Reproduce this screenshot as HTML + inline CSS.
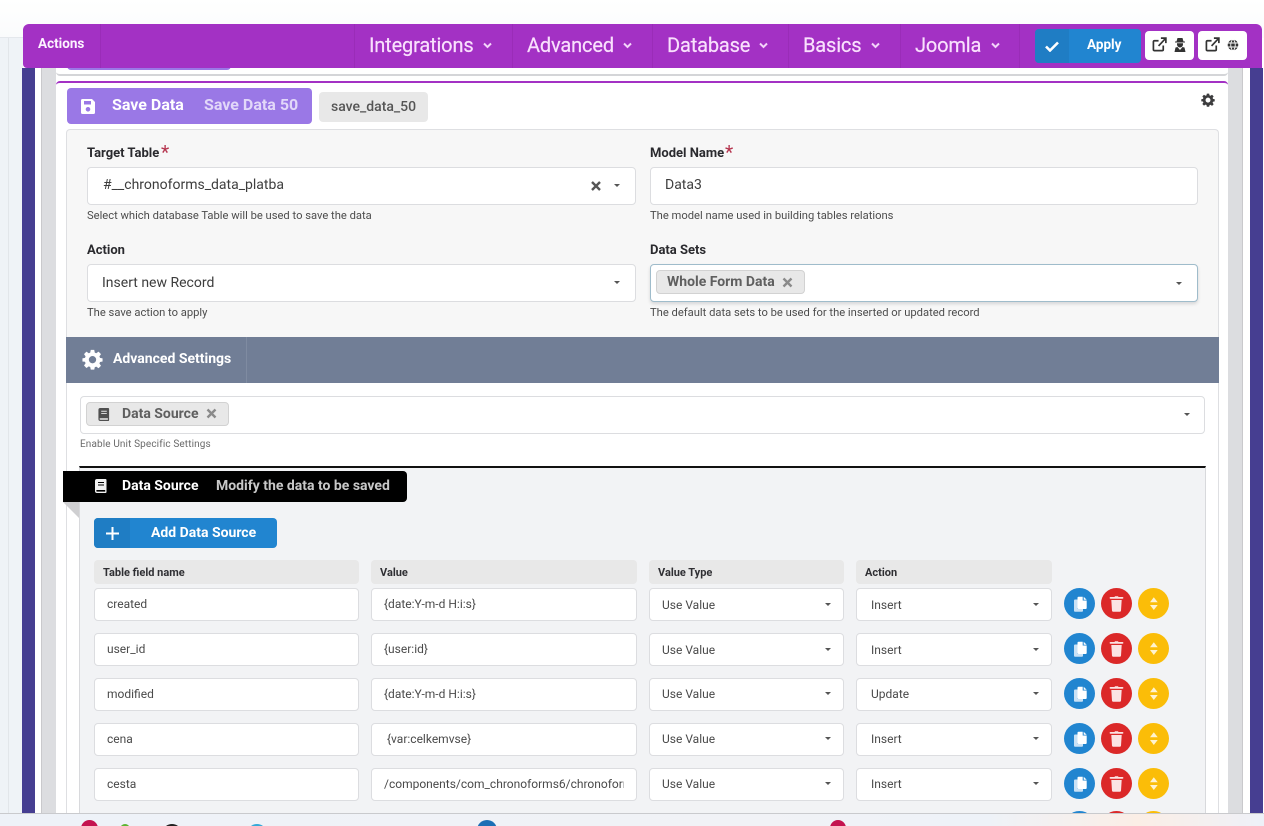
<!DOCTYPE html>
<html><head><meta charset="utf-8"><title>Save Data</title>
<style>
*{box-sizing:border-box}
html,body{margin:0;padding:0;width:1264px;height:826px;overflow:hidden;background:#fff;font-family:"Roboto","Liberation Sans",sans-serif;color:#333}
#root{position:relative;width:1264px;height:826px;overflow:hidden;background:#fff}
.a{position:absolute}
.t{position:absolute;white-space:nowrap;line-height:1}
.box{position:absolute;background:#fff;border:1px solid #dcdde0;border-radius:4px}
.lab{font-size:13px;font-weight:bold;color:#2a2a2e}
.hint{font-size:11.2px;color:#4c4c4c}
.ast{font-size:19px;color:#b5344e}
.hd{position:absolute;top:560px;height:24px;background:#e8e8e8;border-radius:4px;font-size:11px;font-weight:bold;color:#2f2f33;padding:6px 0 0 9px;line-height:13px}
.in{font-size:12px;color:#4a4a4a}
.car{position:absolute;width:0;height:0;border-left:3.500px solid transparent;border-right:3.500px solid transparent;border-top:3.500px solid #555}
.m{font-size:20px;letter-spacing:-.15px;color:#f9e0fd;top:35px;-webkit-text-stroke:.2px #f9e0fd}
.sep{position:absolute;top:24px;height:44px;width:1px;background:#9a2cb8}
.c{position:absolute;width:31px;height:31px;border-radius:50%}
.c svg{position:absolute;left:0;top:0}
.chip{position:absolute;background:#e8e8e8;border:1px solid #d2d2d2;border-radius:4px}
</style></head><body><div id="root">
<svg width="0" height="0" style="position:absolute"><defs>
<symbol id="copy" viewBox="0 0 31 31"><path fill="#c9e1f5" d="M11 11.500h2.500v9.500h5.500v1.700a1 1 0 0 1-1 1H11a1 1 0 0 1-1-1v-10.200a1 1 0 0 1 1-1z"/><path fill="#fff" d="M14.500 8.700h4.200v3.800h4v7.500a1 1 0 0 1-1 1h-7.200a1 1 0 0 1-1-1V9.700a1 1 0 0 1 1-1zM19.700 8.700l3 3h-3z"/></symbol>
<symbol id="trash" viewBox="0 0 31 31"><path fill="#fbe3e3" d="M13.500 9l.5-.8h3l.5.800h4a.6.600 0 0 1 0 1.800H9.500a.6.600 0 0 1 0-1.800zM10.300 12h10.400l-.7 10.800a1 1 0 0 1-1 .9h-7a1 1 0 0 1-1-.9z"/></symbol>
<symbol id="sort" viewBox="0 0 31 31"><path fill="#fff3cf" d="M15.800 9.300l3.900 5h-7.700zM15.800 22l-3.800-5h7.700z"/></symbol>
<symbol id="gear" viewBox="0 0 24 24"><path fill-rule="evenodd" d="M10 1h4l.6 3.100 1.700.7 2.600-1.800 2.800 2.800-1.800 2.600.7 1.700L23.500 10.700v3.600l-2.900.6-.7 1.700 1.800 2.600-2.800 2.800-2.600-1.800-1.700.7L14 23.500h-4l-.6-2.900-1.700-.7-2.600 1.800-2.800-2.800 1.800-2.600-.7-1.700L.5 14.300v-3.600l2.900-.6.7-1.700L2.300 5.800l2.800-2.800 2.600 1.800 1.700-.7zM12 8a4.200 4.200 0 1 0 0 8.400A4.200 4.200 0 0 0 12 8z"/></symbol>
<symbol id="book" viewBox="0 0 12 14"><path fill-rule="evenodd" d="M2 0h8.500a1 1 0 0 1 1 1v12a1 1 0 0 1-1 1H2a2 2 0 0 1-2-2V2a2 2 0 0 1 2-2zM2 11a.8.800 0 0 0 0 1.600h8.200V11zM3 3v1h6V3zM3 5.500v1h6v-1z"/></symbol>
<symbol id="ext" viewBox="0 0 16 16"><path fill="none" stroke="#333" stroke-width="1.800" d="M12 9v4.500a1 1 0 0 1-1 1H2.500a1 1 0 0 1-1-1V5a1 1 0 0 1 1-1H7M7 9.500L14.500 1.500M9.500 1.200h5.300v5.300"/></symbol>
</defs></svg>

<!-- page backdrop -->
<div class="a" style="left:0;top:0;width:1264px;height:38px;background:linear-gradient(#fff,#fafbfc)"></div>
<div class="a" style="left:0;top:37px;width:23px;height:776px;background:#eff3f7;border-top:1px solid #e4e8ec"></div>
<div class="a" style="left:8px;top:38px;width:1px;height:775px;background:#e2e6ea"></div>
<div class="a" style="left:22px;top:68px;width:13px;height:745px;background:#463e91"></div>
<div class="a" style="left:35px;top:68px;width:6px;height:745px;background:#fff"></div>
<div class="a" style="left:41px;top:68px;width:15px;height:745px;background:#dcdde0;border-left:1px solid #c9c9cc"></div>
<div class="a" style="left:1228px;top:68px;width:15px;height:745px;background:#dcdde0;border-right:1px solid #c9c9cc"></div>
<div class="a" style="left:1250px;top:68px;width:13px;height:745px;background:#463e91"></div>

<!-- previous card remnant -->
<div class="a" style="left:56px;top:60px;width:1172px;height:16px;background:#fff;border-bottom:2px solid #d4d5d8;border-radius:0 0 4px 4px"></div>
<div class="a" style="left:67px;top:60px;width:164px;height:10px;background:#9a78e6;border-radius:0 0 4px 4px"></div>

<!-- main card -->
<div class="a" style="left:56px;top:81px;width:1172px;height:740px;background:#fff;border-top:2px solid #a331c4;border-radius:4px 4px 0 0"></div>

<!-- title row -->
<div class="a" style="left:67px;top:88px;width:245px;height:36px;background:#9a78e6;border-radius:4px"></div>
<svg class="a" style="left:81px;top:99px" width="14" height="15" viewBox="0 0 14 15"><path fill="#fff" fill-rule="evenodd" d="M1.500 0H11l3 3v10.500a1.500 1.500 0 0 1-1.500 1.500h-11A1.500 1.500 0 0 1 0 13.500v-12A1.500 1.500 0 0 1 1.500 0zM3 2v3.500h7V2zM7 8a2.300 2.300 0 1 0 0 4.600A2.300 2.300 0 0 0 7 8z"/></svg>
<div class="t" style="left:112px;top:97px;font-size:16px;font-weight:bold;color:#fff">Save Data</div>
<div class="t" style="left:204px;top:97px;font-size:16px;font-weight:bold;color:#e2d7f9">Save Data 50</div>
<div class="a" style="left:319px;top:92px;width:109px;height:30px;background:#e8e8e8;border-radius:4px"></div>
<div class="t" style="left:331px;top:100px;font-size:14px;font-weight:500;color:#555">save_data_50</div>
<svg class="a" style="left:1201px;top:93px;fill:#3c3c3e" width="14" height="14"><use href="#gear"/></svg>

<!-- form panel -->
<div class="a" style="left:66px;top:129px;width:1153px;height:208px;background:#f7f7f7;border:1px solid #dedfe2;border-bottom:0;border-radius:4px 4px 0 0"></div>

<div class="t lab" style="left:87px;top:147px">Target Table</div>
<div class="t ast" style="left:161px;top:143px">*</div>
<div class="box" style="left:87px;top:167px;width:549px;height:38px"></div>
<div class="t" style="left:103px;top:178px;font-size:14px;color:#3d3d3d">#__chronoforms_data_platba</div>
<svg class="a" style="left:590px;top:180px" width="12" height="12" viewBox="0 0 12 12"><path stroke="#555" stroke-width="2.400" d="M2 2l8 8M10 2l-8 8"/></svg>
<div class="car" style="left:614px;top:184px"></div>
<div class="t hint" style="left:87px;top:210px">Select which database Table will be used to save the data</div>

<div class="t lab" style="left:650px;top:147px">Model Name</div>
<div class="t ast" style="left:725px;top:143px">*</div>
<div class="box" style="left:650px;top:167px;width:548px;height:38px"></div>
<div class="t" style="left:665px;top:178px;font-size:14px;color:#3d3d3d">Data3</div>
<div class="t hint" style="left:650px;top:210px">The model name used in building tables relations</div>

<div class="t lab" style="left:87px;top:244px">Action</div>
<div class="box" style="left:87px;top:264px;width:549px;height:38px"></div>
<div class="t" style="left:102px;top:276px;font-size:14px;color:#3d3d3d">Insert new Record</div>
<div class="car" style="left:614px;top:281px"></div>
<div class="t hint" style="left:87px;top:307px">The save action to apply</div>

<div class="t lab" style="left:650px;top:244px">Data Sets</div>
<div class="box" style="left:650px;top:264px;width:548px;height:38px;border-color:#9fbccb;box-shadow:0 2px 3px rgba(34,36,38,.15)"></div>
<div class="chip" style="left:656px;top:270px;width:149px;height:24px"></div>
<div class="t" style="left:667px;top:275px;font-size:14px;font-weight:bold;color:#5f5f5f">Whole Form Data</div>
<svg class="a" style="left:782px;top:277px" width="11" height="11" viewBox="0 0 11 11"><path stroke="#8a8a8a" stroke-width="2.400" d="M1.500 1.500l8 8M9.500 1.500l-8 8"/></svg>
<div class="car" style="left:1176px;top:282px"></div>
<div class="t hint" style="left:650px;top:307px">The default data sets to be used for the inserted or updated record</div>

<!-- advanced settings bar -->
<div class="a" style="left:66px;top:337px;width:1153px;height:46px;background:#717e96"></div>
<div class="a" style="left:246px;top:337px;width:1px;height:46px;background:#7f8ba1"></div>
<svg class="a" style="left:82px;top:349px;fill:#fff" width="21" height="21"><use href="#gear"/></svg>
<div class="t" style="left:113px;top:352px;font-size:14px;font-weight:bold;color:#fff">Advanced Settings</div>

<!-- white lower panel edge -->
<div class="a" style="left:66px;top:383px;width:1px;height:430px;background:#dedfe2"></div>
<div class="a" style="left:1218px;top:383px;width:1px;height:430px;background:#dedfe2"></div>

<div class="box" style="left:80px;top:396px;width:1125px;height:38px"></div>
<div class="chip" style="left:86px;top:402px;width:143px;height:24px"></div>
<svg class="a" style="left:98px;top:408px;fill:#4f4f4f" width="12" height="13"><use href="#book"/></svg>
<div class="t" style="left:122px;top:407px;font-size:14px;font-weight:bold;color:#5f5f5f">Data Source</div>
<svg class="a" style="left:206px;top:408px" width="11" height="11" viewBox="0 0 11 11"><path stroke="#8a8a8a" stroke-width="2.400" d="M1.500 1.500l8 8M9.500 1.500l-8 8"/></svg>
<div class="car" style="left:1184px;top:413px"></div>
<div class="t" style="left:80px;top:440px;font-size:10px;letter-spacing:.12px;color:#6a6a6a">Enable Unit Specific Settings</div>

<!-- data source panel -->
<div class="a" style="left:79px;top:466px;width:1127px;height:347px;background:#f2f3f5;border:1px solid #d8d9dc;border-top:2px solid #111;border-bottom:0"></div>
<svg class="a" style="left:63px;top:502px" width="17" height="16"><path fill="#cfcfd1" d="M0 0h16v16z"/></svg>
<div class="a" style="left:63px;top:471px;width:344px;height:31px;background:#000;border-radius:0 4px 4px 0"></div>
<svg class="a" style="left:95px;top:479px;fill:#f2f2f2" width="12" height="14"><use href="#book"/></svg>
<div class="t" style="left:122px;top:479px;font-size:14px;font-weight:bold;color:#fff">Data Source</div>
<div class="t" style="left:216px;top:479px;font-size:14px;font-weight:bold;color:#c8c8c8">Modify the data to be saved</div>

<div class="a" style="left:94px;top:518px;width:183px;height:30px;background:#2185d0;border-radius:4px"></div>
<div class="a" style="left:94px;top:518px;width:36px;height:30px;background:#1f7dc4;border-radius:4px 0 0 4px"></div>
<svg class="a" style="left:106px;top:527px" width="13" height="13"><path stroke="#fff" stroke-width="2" d="M6.500 0v13M0 6.500h13"/></svg>
<div class="t" style="left:151px;top:526px;font-size:14px;font-weight:bold;color:#fff">Add Data Source</div>

<div class="hd" style="left:94px;width:265px">Table field name</div>
<div class="hd" style="left:371px;width:266px">Value</div>
<div class="hd" style="left:649px;width:195px">Value Type</div>
<div class="hd" style="left:856px;width:196px">Action</div>

<!-- row 1 -->
<div class="box" style="left:94px;top:588px;width:265px;height:33px"></div><div class="t in" style="left:107px;top:598px">created</div>
<div class="box" style="left:371px;top:588px;width:266px;height:33px"></div><div class="t in" style="left:384px;top:598px">{date:Y-m-d H:i:s}</div>
<div class="box" style="left:649px;top:588px;width:195px;height:33px"></div><div class="t in" style="left:662px;top:599px">Use Value</div><div class="car" style="left:825px;top:603px"></div>
<div class="box" style="left:856px;top:588px;width:196px;height:33px"></div><div class="t in" style="left:871px;top:599px">Insert</div><div class="car" style="left:1033px;top:603px"></div>
<div class="c" style="left:1064px;top:588px;background:#2185d0"><svg width="31" height="31"><use href="#copy"/></svg></div>
<div class="c" style="left:1101px;top:588px;background:#db2828"><svg width="31" height="31"><use href="#trash"/></svg></div>
<div class="c" style="left:1138px;top:588px;background:#fbbd08"><svg width="31" height="31"><use href="#sort"/></svg></div>

<!-- row 2 -->
<div class="box" style="left:94px;top:633px;width:265px;height:33px"></div><div class="t in" style="left:107px;top:643px">user_id</div>
<div class="box" style="left:371px;top:633px;width:266px;height:33px"></div><div class="t in" style="left:384px;top:643px">{user:id}</div>
<div class="box" style="left:649px;top:633px;width:195px;height:33px"></div><div class="t in" style="left:662px;top:644px">Use Value</div><div class="car" style="left:825px;top:648px"></div>
<div class="box" style="left:856px;top:633px;width:196px;height:33px"></div><div class="t in" style="left:871px;top:644px">Insert</div><div class="car" style="left:1033px;top:648px"></div>
<div class="c" style="left:1064px;top:633px;background:#2185d0"><svg width="31" height="31"><use href="#copy"/></svg></div>
<div class="c" style="left:1101px;top:633px;background:#db2828"><svg width="31" height="31"><use href="#trash"/></svg></div>
<div class="c" style="left:1138px;top:633px;background:#fbbd08"><svg width="31" height="31"><use href="#sort"/></svg></div>

<!-- row 3 -->
<div class="box" style="left:94px;top:678px;width:265px;height:33px"></div><div class="t in" style="left:107px;top:688px">modified</div>
<div class="box" style="left:371px;top:678px;width:266px;height:33px"></div><div class="t in" style="left:384px;top:688px">{date:Y-m-d H:i:s}</div>
<div class="box" style="left:649px;top:678px;width:195px;height:33px"></div><div class="t in" style="left:662px;top:688px">Use Value</div><div class="car" style="left:825px;top:692px"></div>
<div class="box" style="left:856px;top:678px;width:196px;height:33px"></div><div class="t in" style="left:871px;top:688px">Update</div><div class="car" style="left:1033px;top:692px"></div>
<div class="c" style="left:1064px;top:678px;background:#2185d0"><svg width="31" height="31"><use href="#copy"/></svg></div>
<div class="c" style="left:1101px;top:678px;background:#db2828"><svg width="31" height="31"><use href="#trash"/></svg></div>
<div class="c" style="left:1138px;top:678px;background:#fbbd08"><svg width="31" height="31"><use href="#sort"/></svg></div>

<!-- row 4 -->
<div class="box" style="left:94px;top:723px;width:265px;height:33px"></div><div class="t in" style="left:107px;top:733px">cena</div>
<div class="box" style="left:371px;top:723px;width:266px;height:33px"></div><div class="t in" style="left:387px;top:733px">{var:celkemvse}</div>
<div class="box" style="left:649px;top:723px;width:195px;height:33px"></div><div class="t in" style="left:662px;top:733px">Use Value</div><div class="car" style="left:825px;top:737px"></div>
<div class="box" style="left:856px;top:723px;width:196px;height:33px"></div><div class="t in" style="left:871px;top:733px">Insert</div><div class="car" style="left:1033px;top:737px"></div>
<div class="c" style="left:1064px;top:723px;background:#2185d0"><svg width="31" height="31"><use href="#copy"/></svg></div>
<div class="c" style="left:1101px;top:723px;background:#db2828"><svg width="31" height="31"><use href="#trash"/></svg></div>
<div class="c" style="left:1138px;top:723px;background:#fbbd08"><svg width="31" height="31"><use href="#sort"/></svg></div>

<!-- row 5 -->
<div class="box" style="left:94px;top:768px;width:265px;height:33px"></div><div class="t in" style="left:107px;top:778px">cesta</div>
<div class="box" style="left:371px;top:768px;width:266px;height:33px"></div><div class="t in" style="left:384px;top:778px;width:240px;overflow:hidden">/components/com_chronoforms6/chronoforms</div>
<div class="box" style="left:649px;top:768px;width:195px;height:33px"></div><div class="t in" style="left:662px;top:778px">Use Value</div><div class="car" style="left:825px;top:782px"></div>
<div class="box" style="left:856px;top:768px;width:196px;height:33px"></div><div class="t in" style="left:871px;top:778px">Insert</div><div class="car" style="left:1033px;top:782px"></div>
<div class="c" style="left:1064px;top:768px;background:#2185d0"><svg width="31" height="31"><use href="#copy"/></svg></div>
<div class="c" style="left:1101px;top:768px;background:#db2828"><svg width="31" height="31"><use href="#trash"/></svg></div>
<div class="c" style="left:1138px;top:768px;background:#fbbd08"><svg width="31" height="31"><use href="#sort"/></svg></div>

<!-- row 6 sliver -->
<div class="c" style="left:1064px;top:811px;background:#2185d0"></div>
<div class="c" style="left:1101px;top:811px;background:#db2828"></div>
<div class="c" style="left:1138px;top:811px;background:#fbbd08"></div>

<!-- taskbar -->
<div class="a" style="left:0;top:813px;width:1264px;height:13px;border-top:1px solid #c9cacd;background:linear-gradient(90deg,#eef2f8 0,#f1f2f6 60%,#eef2f8 78%,#fbeee6 90%,#eef1f8 100%);overflow:hidden">
 <div class="a" style="left:81px;top:6px;width:17px;height:17px;border-radius:50%;background:#c4134f"></div>
 <div class="a" style="left:120px;top:10px;width:10px;height:10px;border-radius:50%;background:#5cb531"></div>
 <div class="a" style="left:164px;top:10px;width:16px;height:12px;border-radius:50%;background:#222"></div>
 <div class="a" style="left:249px;top:10px;width:16px;height:12px;border-radius:50%;background:#35a9d8"></div>
 <div class="a" style="left:477px;top:6px;width:20px;height:20px;border-radius:50%;background:#1c6fb5"></div>
 <div class="a" style="left:830px;top:6px;width:16px;height:16px;border-radius:50%;background:#c4134f"></div>
</div>

<!-- purple toolbar -->
<div class="a" style="left:23px;top:24px;width:1239px;height:44px;background:#a331c4;border-radius:6px 6px 0 4px"></div>
<div class="sep" style="left:100px"></div><div class="sep" style="left:354px"></div><div class="sep" style="left:512px"></div><div class="sep" style="left:652px"></div><div class="sep" style="left:788px"></div><div class="sep" style="left:900px"></div><div class="sep" style="left:1019px"></div>
<div class="t" style="left:38px;top:38px;font-size:13.500px;font-weight:bold;color:#fdf3ff">Actions</div>
<div class="t m" style="left:369px">Integrations</div>
<div class="t m" style="left:527px">Advanced</div>
<div class="t m" style="left:667px">Database</div>
<div class="t m" style="left:803px">Basics</div>
<div class="t m" style="left:915px">Joomla</div>
<svg class="a" style="left:483px;top:42px" width="9" height="7"><path fill="none" stroke="#f3d5fa" stroke-width="2" d="M1 1.500l3.500 3.500 3.500-3.500"/></svg>
<svg class="a" style="left:623px;top:42px" width="9" height="7"><path fill="none" stroke="#f3d5fa" stroke-width="2" d="M1 1.500l3.500 3.500 3.500-3.500"/></svg>
<svg class="a" style="left:759px;top:42px" width="9" height="7"><path fill="none" stroke="#f3d5fa" stroke-width="2" d="M1 1.500l3.500 3.500 3.500-3.500"/></svg>
<svg class="a" style="left:871px;top:42px" width="9" height="7"><path fill="none" stroke="#f3d5fa" stroke-width="2" d="M1 1.500l3.500 3.500 3.500-3.500"/></svg>
<svg class="a" style="left:991px;top:42px" width="9" height="7"><path fill="none" stroke="#f3d5fa" stroke-width="2" d="M1 1.500l3.500 3.500 3.500-3.500"/></svg>

<div class="a" style="left:1035px;top:29px;width:106px;height:34px;background:#2185d0;border-radius:4px"></div>
<div class="a" style="left:1035px;top:29px;width:34px;height:34px;background:#1f7dc4;border-radius:4px 0 0 4px"></div>
<svg class="a" style="left:1045px;top:41px" width="14" height="11"><path fill="none" stroke="#fff" stroke-width="2.600" d="M1 5.500l4 4 8-8"/></svg>
<div class="t" style="left:1087px;top:39px;font-size:13.500px;font-weight:bold;color:#fff">Apply</div>

<div class="a" style="left:1145px;top:31px;width:49px;height:29px;background:#fff;border-radius:4px"></div>
<svg class="a" style="left:1152px;top:37px" width="15" height="15"><use href="#ext"/></svg>
<svg class="a" style="left:1174px;top:38px" width="12" height="14" viewBox="0 0 12 14"><path fill="#333" fill-rule="evenodd" d="M3.500 0h5l1 3.500H11V4.500H1V3.500h1.500zM3 5.300h6v1.200a3 3 0 0 1-6 0zM1.500 9.500L3.500 9 6 12l2.500-3 2 .5 1 4.500H.5z"/></svg>
<div class="a" style="left:1198px;top:31px;width:49px;height:29px;background:#fff;border-radius:4px"></div>
<svg class="a" style="left:1205px;top:37px" width="15" height="15"><use href="#ext"/></svg>
<svg class="a" style="left:1227px;top:39px" width="12" height="12" viewBox="0 0 12 12"><circle cx="6" cy="6" r="5.300" fill="#333"/><path stroke="#fff" stroke-width=".9" fill="none" d="M0 4h12M0 8h12M6 0C3 3 3 9 6 12M6 0c3 3 3 9 0 12"/></svg>
</div></body></html>
